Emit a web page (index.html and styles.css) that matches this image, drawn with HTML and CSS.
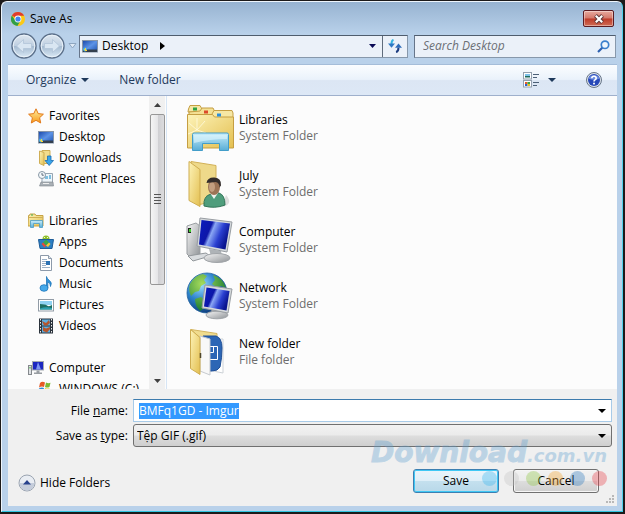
FILE: index.html
```html
<!DOCTYPE html>
<html lang="en">
<head>
  <meta charset="UTF-8">
  <title>Save As</title>
  <link rel="stylesheet" href="styles.css">
</head>
<body>

  <!-- shared icons and gradients -->
  <svg class="defs" width="0" height="0" aria-hidden="true">
    <defs>
      <linearGradient id="folder" x1="0" y1="0" x2="1" y2="1">
        <stop offset="0" stop-color="#fdf3b8"/><stop offset="1" stop-color="#e3bf50"/>
      </linearGradient>
      <linearGradient id="screen" x1="0" y1="0" x2="1" y2="0.4">
        <stop offset="0" stop-color="#0a1cc0"/><stop offset="0.4" stop-color="#0d17a8"/>
        <stop offset="0.5" stop-color="#8aa6f4"/><stop offset="0.75" stop-color="#2a3fd0"/><stop offset="1" stop-color="#0a1590"/>
      </linearGradient>
      <linearGradient id="stand" x1="0" y1="0" x2="0" y2="1">
        <stop offset="0" stop-color="#c9eefb"/><stop offset="1" stop-color="#58add6"/>
      </linearGradient>
      <linearGradient id="metal" x1="0" y1="0" x2="1" y2="1">
        <stop offset="0" stop-color="#f6f6f6"/><stop offset="1" stop-color="#8e9296"/>
      </linearGradient>
      <linearGradient id="desk" x1="0" y1="0" x2="1" y2="1">
        <stop offset="0" stop-color="#1746a8"/><stop offset="0.5" stop-color="#5c93e6"/><stop offset="1" stop-color="#1a4fae"/>
      </linearGradient>
      <radialGradient id="globe" cx="0.35" cy="0.3" r="0.75">
        <stop offset="0" stop-color="#9fdcff"/><stop offset="0.5" stop-color="#2c83cc"/><stop offset="1" stop-color="#0c3674"/>
      </radialGradient>
      <radialGradient id="land" gradientUnits="userSpaceOnUse" cx="16" cy="12" r="26">
        <stop offset="0" stop-color="#a6dc5c"/><stop offset="1" stop-color="#1f7f35"/>
      </radialGradient>
      <linearGradient id="orb" x1="0" y1="0" x2="0" y2="1">
        <stop offset="0" stop-color="#dfe8f1"/><stop offset="0.48" stop-color="#c0d0e1"/>
        <stop offset="0.52" stop-color="#a5bbd1"/><stop offset="1" stop-color="#dcebf7"/>
      </linearGradient>
      <linearGradient id="star" x1="0" y1="0" x2="0" y2="1">
        <stop offset="0" stop-color="#fff0a0"/><stop offset="1" stop-color="#f79a1c"/>
      </linearGradient>
    </defs>
    <symbol id="i-desktop" viewBox="0 0 16 16">
      <rect x="0.5" y="2.5" width="15" height="11.5" fill="url(#desk)" stroke="#8695a8"/>
      <rect x="1" y="11.5" width="14" height="2.5" fill="#34404e"/>
      <circle cx="3" cy="11.5" r="2" fill="#45b4ea"/>
      <path d="M2 11h1v-1h1v2h1v1H3z" fill="#ffd83d"/>
    </symbol>
  </svg>

  <div class="window">
    <header class="title-bar">
      <svg width="14" height="14" viewBox="0 0 14 14" aria-hidden="true">
        <circle cx="7" cy="7" r="7" fill="#fbc916"/>
        <path d="M7 7L0.9 3.5A7 7 0 0 1 13.1 3.7L7 3.7z" fill="#e03c2d"/>
        <path d="M0.9 3.5A7 7 0 0 0 6.4 14L9.6 8.6L7 10L4.3 8.5z" fill="#2f9e48"/>
        <circle cx="7" cy="7" r="3.4" fill="#fff"/>
        <circle cx="7" cy="7" r="2.6" fill="#4285ee"/>
      </svg>
      <h1>Save As</h1>
      <button class="close" type="button" aria-label="Close">
        <svg width="12" height="10" viewBox="0 0 12 10">
          <path d="M2.5 1.5L9.5 8.5M9.5 1.5L2.5 8.5" stroke="#5c3535" stroke-width="4"/>
          <path d="M2.8 1.8L9.2 8.2M9.2 1.8L2.8 8.2" stroke="#fff" stroke-width="2.2"/>
        </svg>
      </button>
    </header>

    <nav class="nav-bar">
      <div class="history">
        <button type="button" aria-label="Back">
          <svg width="26" height="26" viewBox="0 0 26 26">
            <circle cx="13" cy="13" r="12" fill="url(#orb)" stroke="#5c708a" stroke-width="1.4"/>
            <circle cx="13" cy="13" r="10.8" fill="none" stroke="#eaf2f9"/>
            <path d="M5.5 13l7-6.5v4h8v5h-8v4z" fill="#d9e6f2" stroke="#b1c4d8" stroke-width="0.8"/>
          </svg>
        </button>
        <button type="button" aria-label="Forward">
          <svg width="26" height="26" viewBox="0 0 26 26">
            <circle cx="13" cy="13" r="12" fill="url(#orb)" stroke="#5c708a" stroke-width="1.4"/>
            <circle cx="13" cy="13" r="10.8" fill="none" stroke="#eaf2f9"/>
            <path d="M20.5 13l-7-6.5v4h-8v5h8v4z" fill="#d9e6f2" stroke="#b1c4d8" stroke-width="0.8"/>
          </svg>
        </button>
        <button type="button" aria-label="Recent pages">
          <svg width="9" height="6" viewBox="0 0 9 6"><path d="M1 0.5h7L4.5 5z" fill="#dfeaf5" stroke="#8ea6c0"/></svg>
        </button>
      </div>
      <div class="address">
        <button class="crumb" type="button">
          <svg width="16" height="16"><use href="#i-desktop"/></svg>
          <span>Desktop</span>
          <svg width="5" height="8" viewBox="0 0 5 8"><path d="M0 0l5 4l-5 4z" fill="#000"/></svg>
        </button>
        <button class="drop" type="button" aria-label="Previous locations">
          <svg width="7" height="4" viewBox="0 0 7 4"><path d="M0 0h7L3.5 4z" fill="#0a0a55"/></svg>
        </button>
        <button class="refresh" type="button" aria-label="Refresh">
          <svg width="14" height="14" viewBox="0 0 14 14">
            <path d="M5.500 0.800Q3.500 1.500 3.500 5" fill="none" stroke="#35b4e0" stroke-width="2"/>
            <path d="M0 4.500h7L3.500 8.800z" fill="#2f79c4"/>
            <path d="M8 13Q10.500 12.500 10.500 8.500" fill="none" stroke="#1c3c80" stroke-width="2"/>
            <path d="M7 8.800h7L10.500 4.500z" fill="#2f6cba"/>
          </svg>
        </button>
      </div>
      <div class="search">
        <input type="text" placeholder="Search Desktop" aria-label="Search Desktop">
        <svg width="13" height="13" viewBox="0 0 13 13" aria-hidden="true">
          <path d="M1 12L5.5 7.5" stroke="#2c5fae" stroke-width="2.2"/>
          <circle cx="8" cy="4.8" r="3.7" fill="#eef6fd" stroke="#3b80cd" stroke-width="1.7"/>
        </svg>
      </div>
    </nav>

    <div class="tool-bar">
      <button type="button">Organize
        <svg width="8" height="4" viewBox="0 0 8 4"><path d="M0 0h8L4 4z" fill="#1e395b"/></svg>
      </button>
      <button type="button">New folder</button>
      <button class="view" type="button" aria-label="Change your view">
        <svg width="17" height="16" viewBox="0 0 17 16">
          <rect x="0.5" y="0.5" width="8" height="6.5" fill="#fff" stroke="#94a0ae"/>
          <path d="M2 2h5v2H2z" fill="#7fc3ea"/><path d="M2 4h5v1.5H2z" fill="#1e6a5c"/>
          <rect x="0.5" y="8.5" width="8" height="6.5" fill="#fff" stroke="#94a0ae"/>
          <path d="M2 10h2.5v2H2z" fill="#e3572c"/><path d="M4.5 10H7v2H4.5z" fill="#3aa443"/>
          <path d="M2 12h2.5v2H2z" fill="#2b62d0"/><path d="M4.5 12H7v2H4.5z" fill="#e9bd20"/>
          <path d="M10 2.5h6M10 5.5h4M10 10.5h6M10 13.5h4" stroke="#4c6077"/>
        </svg>
        <svg width="8" height="4" viewBox="0 0 8 4"><path d="M0 0h8L4 4z" fill="#1e395b"/></svg>
      </button>
      <button type="button" aria-label="Help">
        <svg width="16" height="16" viewBox="0 0 16 16">
          <circle cx="8" cy="8" r="7.5" fill="#dbe2ec" stroke="#687688"/>
          <circle cx="8" cy="8" r="6" fill="#2648b8"/>
          <path d="M2.5 6.5a6 6 0 0 1 11 0Q8 9 2.5 6.5z" fill="#6d8de0"/>
          <path d="M5.8 6.3Q5.9 4.2 8 4.2T10.2 6.1Q10.2 7.3 9 7.9Q8 8.4 8 9.6" fill="none" stroke="#fff" stroke-width="1.6"/>
          <rect x="7.1" y="10.7" width="1.8" height="1.7" fill="#fff"/>
        </svg>
      </button>
    </div>

    <main class="browser">
      <aside class="side">
        <div class="tree">
          <ul>
            <li class="group"><a href="#">
              <svg width="16" height="16" viewBox="0 0 16 16"><path d="M8 0.8L10.2 5.6L15.4 6.2L11.6 9.7L12.7 15L8 12.3L3.3 15L4.4 9.7L0.6 6.2L5.8 5.6z" fill="url(#star)" stroke="#e2791a"/></svg>
              Favorites</a></li>
            <li><a href="#"><svg width="16" height="16"><use href="#i-desktop"/></svg>Desktop</a></li>
            <li><a href="#">
              <svg width="16" height="16" viewBox="0 0 16 16">
                <path d="M4 0.5h8v13H4z" fill="#f3dd8c" stroke="#cfae55"/>
                <path d="M1.5 1l4.5 1.5v13L1.5 13.5z" fill="url(#folder)" stroke="#cfae55"/>
                <path d="M9.5 6h3.5v4.5h2.5L11.2 15.5L7 10.5h2.5z" fill="#39a5ea" stroke="#1b6cb3" stroke-width="0.8"/>
              </svg>Downloads</a></li>
            <li><a href="#">
              <svg width="16" height="16" viewBox="0 0 16 16">
                <path d="M4 2.5h10.5v9H4z" fill="#eef5fa" stroke="#97a5b2"/>
                <path d="M7 5h3v3H7zM11 4h2v4h-2z" fill="#7fbfe0"/>
                <path d="M3 11h12l0.5 4H1.5z" fill="#a9b0b6" stroke="#7c858c" stroke-width="0.6"/>
                <path d="M5 12.5h6" stroke="#eee"/>
                <circle cx="4" cy="4" r="3.5" fill="#f4f8fb" stroke="#8897a5"/>
                <path d="M4 2v2.2h1.8" fill="none" stroke="#506070" stroke-width="0.9"/>
              </svg>Recent Places</a></li>
          </ul>
          <ul>
            <li class="group"><a href="#">
              <svg width="16" height="16" viewBox="0 0 16 16">
                <path d="M0.5 2.5h1l0.5-1.5h5l1 1.5h7v10.5h-15z" fill="url(#folder)" stroke="#c6a244"/>
                <path d="M3 1.5h2v1H3z" fill="#38a948"/><path d="M1 4.5h14" stroke="#d1b055"/>
                <path d="M2.5 14.5v-7h12v7h-3v-4h-6v4z" fill="url(#stand)" stroke="#4a9cc6" stroke-width="0.8"/>
              </svg>Libraries</a></li>
            <li><a href="#">
              <svg width="16" height="16" viewBox="0 0 16 16">
                <path d="M4.5 5a3.5 3.5 0 0 1 7 0z" fill="#8fbf28"/><circle cx="6.5" cy="3.5" r="0.6" fill="#fff"/><circle cx="9.5" cy="3.5" r="0.6" fill="#fff"/>
                <path d="M0.5 5.5h15l-1.5 9h-12z" fill="#2d7fc3" stroke="#1f5d98"/>
                <path d="M8 5.500l3 3l-3 3l-3-3z" fill="#3aa84c"/><path d="M5 8.500l3 3l-1.500 2L3.500 10z" fill="#e34b3a"/><path d="M11 8.500l-3 3l2 1.500l2.500-3z" fill="#f5cb33"/>
              </svg>Apps</a></li>
            <li><a href="#">
              <svg width="16" height="16" viewBox="0 0 16 16">
                <path d="M2.5 0.5h8l3 3v12h-11z" fill="#fff" stroke="#8d9aaa"/><path d="M10.5 0.5v3h3" fill="#dfe7f0" stroke="#8d9aaa"/>
                <path d="M4 4.5h5M4 6.5h4M4 8.5h4M4 10.5h4M4 12.5h8" stroke="#9db2c8"/><rect x="8" y="6" width="4" height="4" fill="#2c73b5"/>
              </svg>Documents</a></li>
            <li><a href="#">
              <svg width="16" height="16" viewBox="0 0 16 16">
                <path d="M8.5 12V0.5Q9 3 11.5 4.5Q14.5 6.5 12.5 10.5Q12.5 6.5 9.8 6V12z" fill="#2f93da" stroke="#1f76ba" stroke-width="0.8"/>
                <ellipse cx="6" cy="12" rx="4" ry="3.3" fill="#45a9ea" stroke="#1f76ba" stroke-width="0.8"/>
              </svg>Music</a></li>
            <li><a href="#">
              <svg width="16" height="16" viewBox="0 0 16 16">
                <rect x="0.5" y="2.5" width="15" height="11.5" fill="#fff" stroke="#929ca6"/>
                <path d="M2 4h12v4H2z" fill="#8fd2f2"/><path d="M2 7q5 0 7 1.5t5-0.5v4.5H2z" fill="#1e6e62"/><path d="M2 11.5q6-2 12-0.5v1.5H2z" fill="#2ba0b0"/>
              </svg>Pictures</a></li>
            <li><a href="#">
              <svg width="16" height="16" viewBox="0 0 16 16">
                <rect x="1" y="0.5" width="14" height="15" fill="#2b333c"/>
                <path d="M4 1.5h8v6H4zM4 8.5h8v6H4z" fill="#5fb0e2"/>
                <path d="M4 3l4 2l3-3l1 3l-3 2.5H6zM5 9l3 1.5L12 9v2l-3 3.5L5 13z" fill="#b4552d"/>
                <path d="M2.5 1v14M13.5 1v14" stroke="#eee" stroke-dasharray="1.5 1.5"/>
              </svg>Videos</a></li>
          </ul>
          <ul>
            <li class="group"><a href="#">
              <svg width="16" height="16" viewBox="0 0 16 16">
                <rect x="0.5" y="5.5" width="3" height="9" fill="#dfe2e5" stroke="#85898d"/><path d="M1.5 7h1v1.5h-1z" fill="#36b02c"/>
                <rect x="4.5" y="1.5" width="11" height="8.5" fill="#1c27c0" stroke="#a6abb0"/><path d="M10 2l3 7.5H8z" fill="#7e95f0"/>
                <path d="M8.5 10.5h3v2H14v1.5H6V12.5h2.5z" fill="#999ea3"/>
              </svg>Computer</a></li>
            <li><a href="#">
              <svg width="16" height="16" viewBox="0 0 16 16">
                <path d="M2 2q2-2 5-0.5L6 6Q3.5 5 1 6.5z" fill="#e65a25"/><path d="M8 1.5q2.5 1.2 4.5 0.2l-1 4.300Q9 7 7 6z" fill="#7ab933"/>
                <path d="M1 7.500q2.500-1.500 5-0.500l-1 4q-2-1-5 0.500z" fill="#2f8bd6"/><path d="M7 7q2.500 1 4.500 0l-1 4q-2 1-4.500 0z" fill="#f5c62b"/>
                <path d="M10 9h6v5H6v-2h4z" fill="#b7bcc2"/>
              </svg>WINDOWS (C:)</a></li>
          </ul>
        </div>
        <div class="scroll">
          <svg width="7" height="4" viewBox="0 0 7 4"><path d="M3.5 0L7 4H0z" fill="#404040"/></svg>
          <div class="thumb"><i></i><i></i><i></i><i></i></div>
          <svg width="7" height="4" viewBox="0 0 7 4"><path d="M0 0h7L3.5 4z" fill="#404040"/></svg>
        </div>
      </aside>

      <ul class="files">
        <li>
          <svg width="48" height="48" viewBox="0 0 48 48">
            <path d="M2.5 5l1.5-3.500h10l2 3.500V8h-14z" fill="#f6e7a4" stroke="#c59e42"/>
            <path d="M3 8L14 7l2-3h11l2 4v5H3z" fill="#f4e094" stroke="#c59e42"/>
            <path d="M26 10l2-3.500h18L47 9v6H26z" fill="#f6e7a4" stroke="#c59e42"/>
            <path d="M1.500 10.500h25l2 2.500h19v31h-46z" fill="url(#folder)" stroke="#c59e42"/>
            <path d="M7 3.500h4v3H7z" fill="#2fa342"/><path d="M18 6.500h4v3h-4z" fill="#dc4a2a"/><path d="M31 9.500h4v3h-4z" fill="#2c8fda"/>
            <path d="M11 26L3 19M11 26V14M11 26l8-9M11 26L2 30M11 26l9 3" stroke="#fffbe0" stroke-width="0.8"/>
            <path d="M6.500 46.500v-16q0-1.500 1.500-1.500h33q1.500 0 1.500 1.500v16h-9v-7h-17v7z" fill="url(#stand)" stroke="#429dc9"/>
            <path d="M8 31h33v4Q24 35 8 39z" fill="#dff6fe" opacity="0.6"/>
          </svg>
          <div><a href="#">Libraries</a><span>System Folder</span></div>
        </li>
        <li>
          <svg width="48" height="48" viewBox="0 0 48 48">
            <path d="M36 47q12-3 4-12z" fill="#ddd"/>
            <path d="M5 1.500l25 4v35l-16 4z" fill="#eed98a" stroke="#d2b158"/>
            <path d="M3 1.500l11 8v37l-11-6z" fill="url(#folder)" stroke="#cfad50"/>
            <path d="M18 46q-1-10 7-12l8-1q6 2 6 12q-10 4-21 1z" fill="#4f9d7c" stroke="#327558"/>
            <path d="M24 33l4 6l4-6z" fill="#edf3ef"/>
            <ellipse cx="28" cy="27" rx="6" ry="8" fill="#9c7456"/><ellipse cx="26" cy="27" rx="3" ry="5" fill="#c39f80"/>
            <path d="M20.500 23q1-6 8-5.500q7 0.500 6.500 8l-1.500 2q0-5-4-5.500z" fill="#332d2b"/>
          </svg>
          <div><a href="#">July</a><span>System Folder</span></div>
        </li>
        <li>
          <svg width="48" height="48" viewBox="0 0 48 48">
            <path d="M1 10l9-3l4 3v29l-9 3l-4-4z" fill="url(#metal)" stroke="#9a9ea2"/><path d="M2 12h3v5H2z" fill="#222"/><path d="M3 13h2v3H3z" fill="#3ed22d"/>
            <path d="M2 40l18-3l4 3l-17 5z" fill="#d9dcdf" stroke="#92979b"/>
            <path d="M23 33l12 2l1 5H25z" fill="#aeb3b7"/><ellipse cx="31" cy="42" rx="13" ry="4.500" fill="url(#metal)" stroke="#a0a4a8"/>
            <path d="M14 2l32 4l-5 30l-30-6z" fill="#d5d9dc" stroke="#989da2"/>
            <path d="M15.500 4L44 7.500L39.500 33.500L13 28.500z" fill="url(#screen)"/>
          </svg>
          <div><a href="#">Computer</a><span>System Folder</span></div>
        </li>
        <li>
          <svg width="48" height="48" viewBox="0 0 48 48">
            <circle cx="21" cy="21" r="20" fill="url(#globe)" stroke="#2463a0" stroke-width="0.8"/>
            <path d="M4 12Q9 3 17 2l4 2l-3 4l2 3l-5 3l-2 5l-4 1l-4 4q-3-6-1-12zM27 3q10 3 13 13l-5-2l-4 2l-5-4l3-4zM9 27l6-2l6 5l-2 6l-5 3q-5-5-5-12z" fill="url(#land)"/>
            <path d="M25 36l9 1l1 5h-9z" fill="#a9aeb3"/><ellipse cx="31" cy="43" rx="11" ry="3.800" fill="url(#metal)" stroke="#a0a4a8"/>
            <path d="M19 13l27 4l-4 24l-26-5z" fill="#d5d9dc" stroke="#989da2"/>
            <path d="M20.500 15.500L43.500 19L40.500 38.500L18 34.500z" fill="url(#screen)"/>
          </svg>
          <div><a href="#">Network</a><span>System Folder</span></div>
        </li>
        <li>
          <svg width="48" height="48" viewBox="0 0 48 48">
            <path d="M5 1.500l26 4v6H16z" fill="#f0dc8e" stroke="#d5b660"/>
            <path d="M27 11h10v34l-10-2z" fill="#fff" stroke="#cdd2d7"/>
            <path d="M17 8h13q6 2 6 12t-2 19q-2 4-8 4h-9z" fill="#2c66b5" stroke="#1f4f96"/>
            <path d="M24 18.500h7.500v13H24M24 24.500h3.500v-6" fill="none" stroke="#fff"/>
            <path d="M14 8l10 3v36l-10-4z" fill="#f8f8f8" stroke="#c6cacf"/>
            <path d="M4.500 1.500l9.500 8v37l-9.500-6z" fill="url(#folder)" stroke="#cfad50"/>
            <path d="M14.500 25v5" stroke="#4f4629" stroke-width="1.500"/>
          </svg>
          <div><a href="#">New folder</a><span>File folder</span></div>
        </li>
      </ul>
    </main>

    <form class="save-form">
      <label for="filename">File <u>n</u>ame:</label>
      <div class="combo">
        <input type="text" id="filename" value="BMFq1GD - Imgur" autofocus>
        <svg width="8" height="4" viewBox="0 0 8 4"><path d="M0 0h8L4 4z"/></svg>
      </div>
      <label for="filetype">Save as <u>t</u>ype:</label>
      <div class="combo grey">
        <select id="filetype"><option>Tệp GIF (.gif)</option></select>
        <svg width="8" height="4" viewBox="0 0 8 4"><path d="M0 0h8L4 4z"/></svg>
      </div>
      <div class="actions">
        <button class="hide" type="button">
          <svg width="18" height="18" viewBox="0 0 18 18">
            <circle cx="9" cy="9" r="8" fill="#e9edf3" stroke="#9aa3b0"/>
            <path d="M1.5 9a7.5 7.5 0 0 0 15 0z" fill="#c5cddb"/>
            <path d="M9 6l4 4.5H5z" fill="#27418c"/>
          </svg>
          Hide Folders
        </button>
        <button class="btn primary" type="button">Save</button>
        <button class="btn" type="button">Cancel</button>
      </div>
      <svg class="grip" width="10" height="10" viewBox="0 0 10 10" aria-hidden="true">
        <path d="M7 0h2v2H7zM7 3h2v2H7zM7 6h2v2H7zM4 3h2v2H4zM4 6h2v2H4zM1 6h2v2H1z" fill="#b8b8b8"/>
      </svg>
      <div class="watermark">
        <p>Download<small>.com.vn</small></p>
        <div class="dots"><i class="sky"></i><i class="silver"></i><i class="green"></i><i class="orange"></i><i class="blue"></i><i class="red"></i></div>
      </div>
    </form>
  </div>

  <script>
    const filename = document.getElementById("filename");
    filename.focus();
    filename.select();
  </script>
</body>
</html>
```

FILE: styles.css
```css
* {
  box-sizing: border-box;
}

body {
  margin: 0;
  padding: 1px 2px 2px 1px;
  height: 100vh;
  background-color: #1c1a1a;
  font-family: "Open Sans", "Noto Sans", sans-serif;
  font-size: 12px;
  line-height: 16px;
  color: #000;
  overflow: hidden;
}

button, input, select {
  font: inherit;
  color: inherit;
  margin: 0;
  padding: 0;
  border: none;
  background: none;
  outline: none;
}

a {
  color: inherit;
  text-decoration: none;
}

ul {
  list-style: none;
  margin: 0;
  padding: 0;
}

svg {
  flex: none;
  display: block;
}

.defs {
  position: absolute;
}

.window {
  display: flex;
  flex-direction: column;
  height: 100%;
  padding: 0 5px 5px 6px;
  border: 1px solid #eef5fc;
  border-right-color: #4fd0ea;
  border-bottom-color: #2fc4e0;
  border-radius: 6px 6px 0 0;
  background: linear-gradient(#97b3d1, #b9d1ea 32px);
}

/* title */
.title-bar {
  display: flex;
  align-items: center;
  height: 30px;
  padding: 3px 3px 0;
  gap: 5px;
}

.title-bar h1 {
  flex: 1;
  margin: 0;
  font-size: 12px;
  font-weight: normal;
}

.close {
  display: flex;
  align-items: center;
  justify-content: center;
  width: 31px;
  height: 17px;
  border: 1px solid #5b1c22;
  border-radius: 2px;
  background: linear-gradient(#e7a99d, #d4786a 48%, #bd3a28 52%, #cf6c55);
  box-shadow: inset 0 0 0 1px rgba(255, 255, 255, 0.4);
}

/* navigation */
.nav-bar {
  display: flex;
  align-items: center;
  height: 32px;
  padding: 0 1px 4px 3px;
}

.history {
  display: flex;
  align-items: center;
  gap: 2px;
  width: 68px;
}

.history button:last-child {
  margin-left: 1px;
}

.address, .search {
  display: flex;
  align-items: center;
  height: 23px;
  border: 1px solid #8798ab;
  border-top-color: #4f5d6e;
  border-left-color: #66758a;
  background-color: #ebf1f9;
}

.address {
  flex: 1;
}

.crumb {
  display: flex;
  align-items: center;
  gap: 4px;
  flex: 1;
  padding-left: 2px;
}

.crumb svg:last-child {
  margin-left: 8px;
}

.drop {
  padding: 6px;
}

.refresh {
  display: flex;
  align-items: center;
  justify-content: center;
  width: 25px;
  height: 100%;
  border-left: 1px solid #5f6c7c;
}

.search {
  width: 202px;
  margin-left: 6px;
  padding: 0 5px 0 8px;
}

.search input {
  flex: 1;
  min-width: 0;
  font-style: italic;
}

.search input::placeholder {
  color: #6b6f75;
}

/* toolbar */
.tool-bar {
  display: flex;
  align-items: center;
  height: 32px;
  padding: 0 15px 0 18px;
  gap: 30px;
  border-top: 1px solid #a5bdd9;
  border-bottom: 1px solid #9fb0cc;
  background: linear-gradient(#fbfdff, #eaf2fb 48%, #dce6f4 52%, #dde8f6);
  color: #1e395b;
}

.tool-bar button {
  display: flex;
  align-items: center;
  gap: 5px;
}

.tool-bar .view {
  margin-left: auto;
  gap: 8px;
}

/* folders and files */
.browser {
  display: flex;
  flex: 1;
  min-height: 0;
  background-color: #fcfcfc;
}

.side {
  display: flex;
  width: 159px;
  border-right: 1px solid #d6e5f5;
}

.tree {
  flex: 1;
  min-width: 0;
  padding: 9px 0 0 20px;
  overflow: hidden;
  white-space: nowrap;
}

.tree ul {
  margin-bottom: 21px;
}

.tree li {
  height: 21px;
  padding-left: 10px;
}

.tree .group {
  padding-left: 0;
}

.tree a {
  display: flex;
  align-items: center;
  gap: 5px;
  height: 21px;
}

.scroll {
  display: flex;
  flex-direction: column;
  align-items: center;
  width: 16px;
  margin-right: 1px;
  padding: 7px 0 6px;
  background-color: #f0f0f0;
}

.scroll svg:last-child {
  margin-top: auto;
}

.thumb {
  display: flex;
  flex-direction: column;
  align-items: center;
  justify-content: center;
  gap: 2px;
  width: 15px;
  height: 61%;
  margin-top: 7px;
  border: 1px solid #979797;
  border-radius: 2px;
  background: linear-gradient(to right, #f5f5f5, #e6e6e8 50%, #cfcfd2 52%, #dcdcde);
}

.thumb i {
  width: 7px;
  height: 1px;
  background-color: #555;
}

.files {
  flex: 1;
  padding: 4px 0 0 19px;
  overflow: hidden;
}

.files li {
  display: flex;
  align-items: center;
  gap: 5px;
  height: 56px;
}

.files a, .files span {
  display: block;
}

.files span {
  color: #6d6d6d;
}

/* file name, type and buttons */
.save-form {
  position: relative;
  display: grid;
  grid-template-columns: 120px 1fr;
  align-items: center;
  gap: 2px 5px;
  padding: 10px 5px 13px 0;
  background-color: #f0f0f0;
}

.save-form label {
  text-align: right;
}

.combo {
  display: flex;
  align-items: center;
  height: 23px;
  padding: 0 5px 0 3px;
  border: 1px solid #a8cbe8;
  border-top-color: #3d7bad;
  background-color: #fff;
}

.combo input, .combo select {
  flex: 1;
  min-width: 0;
  appearance: none;
}

.combo input {
  padding-left: 2px;
}

.combo input::selection {
  background-color: #3399ff;
  color: #fff;
}

.combo.grey {
  border: 1px solid #707070;
  border-radius: 3px;
  background: linear-gradient(#f2f2f2, #ebebeb 48%, #dddddd 52%, #cfcfcf);
}

.actions {
  grid-column: 1 / 3;
  display: flex;
  align-items: center;
  gap: 14px;
  padding: 20px 13px 0 10px;
}

.hide {
  display: flex;
  align-items: center;
  gap: 4px;
  margin-right: auto;
  padding-top: 4px;
}

.btn {
  width: 86px;
  height: 24px;
  border: 1px solid #707070;
  border-radius: 3px;
  background: linear-gradient(#f2f2f2, #ebebeb 48%, #dddddd 52%, #cfcfcf);
  box-shadow: inset 0 0 0 1px #f6f6f6;
}

.primary {
  border-color: #3c7fb1;
  background: linear-gradient(#eaf4fa, #dfeff8 48%, #c4e0ee 52%, #b8d8e9);
  box-shadow: inset 0 0 0 1px #3fc8f5;
}

.grip {
  position: absolute;
  right: 2px;
  bottom: 1px;
}

.watermark {
  position: absolute;
  right: 10px;
  bottom: 20px;
  opacity: 0.35;
  pointer-events: none;
}

.watermark p {
  margin: 0;
  font-family: "DejaVu Sans", sans-serif;
  font-size: 28px;
  font-style: italic;
  font-weight: bold;
  line-height: 30px;
  color: #5d9fd0;
  -webkit-text-stroke: 1px #5d9fd0;
}

.watermark small {
  font-size: 18px;
  -webkit-text-stroke-width: 0;
}

.dots {
  display: flex;
  justify-content: flex-end;
  gap: 7px;
}

.dots i {
  width: 15px;
  height: 15px;
  border-radius: 50%;
}

.sky { background-color: #35b5ee; }
.silver { background-color: #c4c4c4; }
.green { background-color: #8cc63e; }
.orange { background-color: #f6a52a; }
.blue { background-color: #2a78bd; }
.red { background-color: #ea3a45; }
```
